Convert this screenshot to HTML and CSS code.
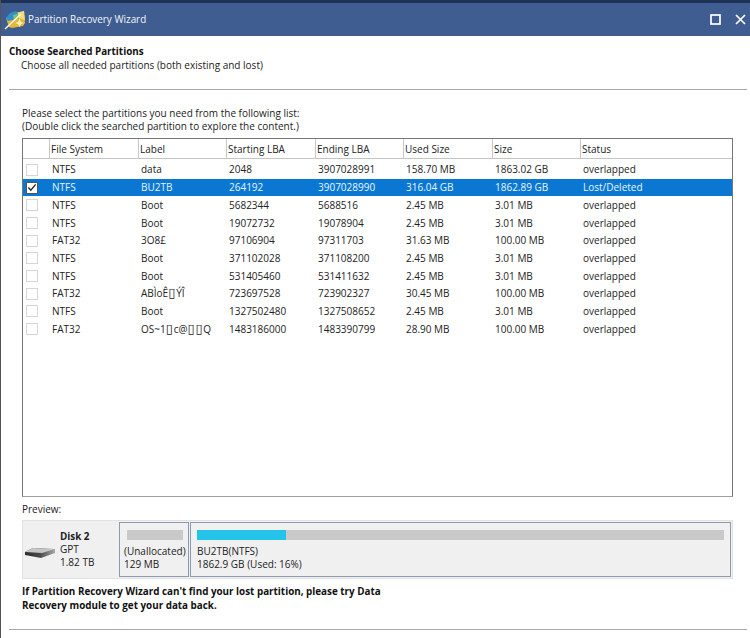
FILE: index.html
```html
<!DOCTYPE html>
<html lang="en">
<head>
<meta charset="utf-8">
<title>Partition Recovery Wizard</title>
<link rel="stylesheet" href="styles.css">
</head>
<body>
<div class="window">
  <div class="topstrip"></div>
  <header class="titlebar">
    <svg class="appicon" width="22" height="22" viewBox="0 0 22 22">
      <path d="M2 9 L12 4 L20 2 L21 14 L19 17 L8 19 L5 18 Z" fill="#e5b63c"/>
      <path d="M12 4 L20 2 L21 11 L15 9 Z" fill="#f2dc78"/>
      <path d="M2 9 L6 4 L12 2 L14 5 L9 11 L4 12 Z" fill="#2f8fd0"/>
      <path d="M9 6 L14 5 L15 9 L10 12 Z" fill="#7cc36a"/>
      <path d="M1 20 L17 5" stroke="#fdf8d8" stroke-width="1.5"/>
      <path d="M14 13 L15.5 9.5 L17 13 L20 14 L17 15 L15.5 18 L14 15 L11 14 Z" fill="#fff4b0"/>
    </svg>
    <span class="apptitle">Partition Recovery Wizard</span>
    <svg class="winbtn maxbtn" width="11" height="11" viewBox="0 0 11 11"><rect x="1" y="1" width="9" height="9" fill="none" stroke="#fff" stroke-width="1.7"/></svg>
    <svg class="winbtn closebtn" width="11" height="11" viewBox="0 0 11 11"><path d="M1 1 L10 10 M10 1 L1 10" stroke="#fff" stroke-width="1.7"/></svg>
  </header>
  <main class="content">
    <section class="intro">
      <h1>Choose Searched Partitions</h1>
      <p>Choose all needed partitions (both existing and lost)</p>
    </section>
    <hr class="rule">
    <section class="listsec">
      <p class="hint">Please select the partitions you need from the following list:<br>(Double click the searched partition to explore the content.)</p>
      <div class="table">
        <div class="row head">
          <span></span><span>File System</span><span>Label</span><span>Starting LBA</span><span>Ending LBA</span><span>Used Size</span><span>Size</span><span>Status</span>
        </div>
        <div class="row"><i class="check"></i><span>NTFS</span><span>data</span><span>2048</span><span>3907028991</span><span>158.70 MB</span><span>1863.02 GB</span><span>overlapped</span></div>
        <div class="row selected"><i class="check on"><svg width="11" height="11" viewBox="0 0 11 11"><path d="M1.5 5.5 L4.2 8.5 L9.5 2" fill="none" stroke="#222" stroke-width="1.4"/></svg></i><span>NTFS</span><span>BU2TB</span><span>264192</span><span>3907028990</span><span>316.04 GB</span><span>1862.89 GB</span><span>Lost/Deleted</span></div>
        <div class="row"><i class="check"></i><span>NTFS</span><span>Boot</span><span>5682344</span><span>5688516</span><span>2.45 MB</span><span>3.01 MB</span><span>overlapped</span></div>
        <div class="row"><i class="check"></i><span>NTFS</span><span>Boot</span><span>19072732</span><span>19078904</span><span>2.45 MB</span><span>3.01 MB</span><span>overlapped</span></div>
        <div class="row"><i class="check"></i><span>FAT32</span><span>3O8£</span><span>97106904</span><span>97311703</span><span>31.63 MB</span><span>100.00 MB</span><span>overlapped</span></div>
        <div class="row"><i class="check"></i><span>NTFS</span><span>Boot</span><span>371102028</span><span>371108200</span><span>2.45 MB</span><span>3.01 MB</span><span>overlapped</span></div>
        <div class="row"><i class="check"></i><span>NTFS</span><span>Boot</span><span>531405460</span><span>531411632</span><span>2.45 MB</span><span>3.01 MB</span><span>overlapped</span></div>
        <div class="row"><i class="check"></i><span>FAT32</span><span>ABÌoÊ<b class="tofu">▯</b>ÝÎ</span><span>723697528</span><span>723902327</span><span>30.45 MB</span><span>100.00 MB</span><span>overlapped</span></div>
        <div class="row"><i class="check"></i><span>NTFS</span><span>Boot</span><span>1327502480</span><span>1327508652</span><span>2.45 MB</span><span>3.01 MB</span><span>overlapped</span></div>
        <div class="row"><i class="check"></i><span>FAT32</span><span>OS~1<b class="tofu">▯</b>c@<b class="tofu">▯▯</b>Q</span><span>1483186000</span><span>1483390799</span><span>28.90 MB</span><span>100.00 MB</span><span>overlapped</span></div>
      </div>
      <p class="preview-label">Preview:</p>
      <div class="diskmap">
        <div class="diskinfo">
          <svg class="diskicon" width="30" height="12" viewBox="0 0 30 12">
            <defs><linearGradient id="diskfront" x1="0" x2="1" y1="0" y2="0"><stop offset="0" stop-color="#2b2b2b"/><stop offset="0.5" stop-color="#4a4a4a"/><stop offset="1" stop-color="#a8a8a8"/></linearGradient></defs>
            <path d="M0 5 L8 1 L30 2 L30 6 L16 11 L0 8 Z" fill="url(#diskfront)"/>
            <path d="M0 5 L8 1 L30 2 L17 6 Z" fill="#c6c6c6"/>
          </svg>
          <div class="disktext"><b>Disk 2</b><span>GPT</span><span>1.82 TB</span></div>
        </div>
        <div class="part unalloc">
          <div class="bar"></div>
          <div class="parttext">(Unallocated)<br>129 MB</div>
        </div>
        <div class="part main">
          <div class="bar"><div class="used"></div></div>
          <div class="parttext">BU2TB(NTFS)<br>1862.9 GB (Used: 16%)</div>
        </div>
      </div>
      <p class="note">If Partition Recovery Wizard can't find your lost partition, please try Data<br>Recovery module to get your data back.</p>
    </section>
    <hr class="rule">
  </main>
</div>
</body>
</html>
```

FILE: styles.css
```css
* { box-sizing: border-box; }
html, body { margin: 0; padding: 0; background: #fff; }
body { width: 750px; height: 638px; overflow: hidden; font-family: "Open Sans", "Noto Sans", "DejaVu Sans", sans-serif; font-size: 10px; color: #222; }
.window { height: 638px; display: flex; flex-direction: column; border-left: 1px solid #555; }
.topstrip { height: 3px; background: #1e3157; flex: none; }
.titlebar { height: 33px; flex: none; background: #3f5d90; display: flex; align-items: center; padding: 0 3px 0 3px; color: #f2f5fa; }
.appicon { flex: none; margin-top: 1px; }
.apptitle { margin-left: 2px; margin-top: -2px; font-size: 9.9px; flex: 1; }
.winbtn { flex: none; }
.closebtn { margin-left: 14px; margin-right: 1px; }
.content { flex: 1; padding: 8px 3px 0 8px; }
.intro h1 { margin: 0; font-size: 9.85px; line-height: 14px; font-weight: 700; color: #111; }
.intro p { margin: 0 0 0 12px; line-height: 14px; }
.rule { margin: 17px 0 0; border: 0; height: 1px; background: #a8a8a8; }
.listsec { padding: 0 13px 0 13px; }
.hint { margin: 17px 0 0; line-height: 13px; }
.table { margin-top: 5px; height: 359px; border: 1px solid #777; border-bottom-color: #a0a0a0; background: #fff; width: 711px; }
.row { display: grid; grid-template-columns: 26px 89px 88px 89px 88px 89px 88px 1fr; height: 17.7px; align-items: center; }
.row > span { padding-left: 3px; white-space: nowrap; line-height: 17px; }
.row.head { height: 20px; border-bottom: 1px solid #c4c4c4; margin-bottom: 2.1px; }
.row.head > span { padding-left: 1px; height: 100%; line-height: 20px; border-left: 1px solid #c8c8c8; }
.row.head > span:first-child { border-left: 0; }
.row.selected { background: #0a78d2; color: #eaf4fd; }
.tofu { font-weight: 400; font-size: 13px; line-height: 0; letter-spacing: 0.8px; }
.check { display: block; width: 12px; height: 12px; margin-left: 3px; border: 1px solid #d6d6d6; background: #fff; }
.check.on { border-color: #555; display: flex; align-items: center; justify-content: center; }
.preview-label { margin: 5px 0 0; line-height: 14px; }
.diskmap { margin-top: 4px; width: 711px; height: 59px; display: flex; border: 1px solid #e2e2e2; background: #f0f0f0; padding: 1px 1px 1px 0; }
.diskinfo { width: 95px; flex: none; display: flex; align-items: center; padding: 0 0 0 2px; }
.diskicon { flex: none; margin-top: 6px; }
.disktext { margin-left: 5px; display: flex; flex-direction: column; line-height: 13px; }
.disktext b { font-weight: 700; font-size: 9.85px; color: #222; }
.part { border: 1px solid #8d9bb0; background: #f0f0f0; padding: 7px 6px 0 6px; margin-left: 1px; overflow: hidden; }
.part.unalloc { width: 70px; flex: none; padding-left: 4px; }
.part.main { flex: 1; }
.bar { height: 10px; background: #c9c9c9; }
.unalloc .bar { margin: 0 0 0 3px; width: 56px; }
.used { width: 89px; height: 100%; background: #24c4ea; }
.parttext { margin-top: 5px; line-height: 13px; white-space: nowrap; }
.note { margin: 5px 0 0; font-weight: 700; font-size: 9.85px; line-height: 14px; color: #111; }
.listsec + .rule { margin-top: 17px; }
```
